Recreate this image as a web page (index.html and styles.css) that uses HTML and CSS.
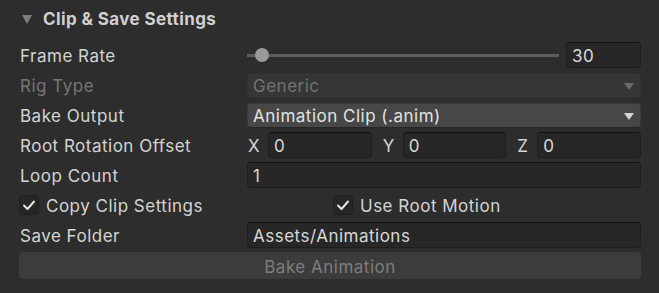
FILE: index.html
```html
<!DOCTYPE html>
<html>
<head>
<meta charset="utf-8">
<link rel="stylesheet" href="styles.css">
</head>
<body>
<div class="panel">
  <div class="header">
    <span class="fold"></span>
    <span class="title">Clip &amp; Save Settings</span>
  </div>
  <div class="rows">
    <div class="row">
      <div class="label">Frame Rate</div>
      <div class="slider-wrap">
        <div class="slider"><div class="track"></div><div class="thumb"></div></div>
        <div class="field num">30</div>
      </div>
    </div>
    <div class="row">
      <div class="label disabled">Rig Type</div>
      <div class="dropdown off"><span>Generic</span><span class="arrow"></span></div>
    </div>
    <div class="row">
      <div class="label">Bake Output</div>
      <div class="dropdown"><span>Animation Clip (.anim)</span><span class="arrow"></span></div>
    </div>
    <div class="row">
      <div class="label">Root Rotation Offset</div>
      <div class="vec">
        <div class="axis"><span class="al">X</span><div class="field">0</div></div>
        <div class="axis"><span class="al">Y</span><div class="field">0</div></div>
        <div class="axis"><span class="al">Z</span><div class="field">0</div></div>
      </div>
    </div>
    <div class="row">
      <div class="label">Loop Count</div>
      <div class="field">1</div>
    </div>
    <div class="row checks">
      <label class="check"><span class="box"><svg viewBox="0 0 20 20" width="20" height="20"><path d="M5 10.5 L8.5 14 L15 6.5" fill="none" stroke="#e6e6e6" stroke-width="2" stroke-linecap="round" stroke-linejoin="round"/></svg></span><span class="ct">Copy Clip Settings</span></label>
      <label class="check second"><span class="box"><svg viewBox="0 0 20 20" width="20" height="20"><path d="M5 10.5 L8.5 14 L15 6.5" fill="none" stroke="#e6e6e6" stroke-width="2" stroke-linecap="round" stroke-linejoin="round"/></svg></span><span class="ct">Use Root Motion</span></label>
    </div>
    <div class="row">
      <div class="label">Save Folder</div>
      <div class="field">Assets/Animations</div>
    </div>
    <div class="button">Bake Animation</div>
  </div>
</div>
</body>
</html>
```
FILE: styles.css
```css
html, body {
  margin: 0;
  padding: 0;
  background: #2d2d2d;
}
body {
  width: 659px;
  height: 293px;
  overflow: hidden;
  font-family: Inter, "Noto Sans", sans-serif;
  font-size: 17px;
  letter-spacing: 0.5px;
  color: #d4d4d4;
}
.panel {
  padding: 6px 18px 0 19px;
}
.header {
  height: 26px;
  display: flex;
  align-items: center;
  margin-bottom: 10px;
}
.fold {
  width: 0;
  height: 0;
  border-left: 5px solid transparent;
  border-right: 5px solid transparent;
  border-top: 9px solid #7c7c7c;
  margin-left: 3px;
  margin-right: 11px;
}
.title {
  font-weight: 700;
  letter-spacing: 0.4px;
  color: #d0d0d0;
}
.rows {
  display: flex;
  flex-direction: column;
  gap: 4px;
}
.row {
  display: grid;
  grid-template-columns: 228px 1fr;
  height: 26px;
  align-items: center;
}
.label {
  padding-left: 1px;
  padding-top: 2px;
  white-space: nowrap;
}
.label.disabled {
  color: #767676;
}
.slider-wrap {
  display: flex;
  align-items: center;
  gap: 7px;
  height: 26px;
}
.slider {
  flex: 1;
  position: relative;
  height: 26px;
  display: flex;
  align-items: center;
}
.track {
  width: 100%;
  height: 3px;
  background: #5d5d5d;
}
.thumb {
  position: absolute;
  left: 8px;
  top: 6px;
  width: 14px;
  height: 14px;
  border-radius: 50%;
  background: #999999;
}
.field {
  box-sizing: border-box;
  height: 26px;
  background: #272727;
  border: 1px solid #1e1e1e;
  border-top-color: #121212;
  border-radius: 4px;
  padding: 2px 5px 0;
  display: flex;
  align-items: center;
  color: #d8d8d8;
  white-space: nowrap;
}
.field.num {
  width: 75px;
}
.dropdown {
  box-sizing: border-box;
  height: 25px;
  background: #474747;
  border-radius: 4px;
  border: 1px solid #3a3a3a;
  border-bottom-color: #262626;
  padding: 2px 5px 0;
  display: flex;
  align-items: center;
  justify-content: space-between;
  color: #e2e2e2;
}
.dropdown.off {
  background: #363636;
  border-color: #333;
  color: #727272;
}
.arrow {
  width: 0;
  height: 0;
  border-left: 5px solid transparent;
  border-right: 5px solid transparent;
  border-top: 7px solid #d4d4d4;
  margin-right: 1px;
}
.dropdown.off .arrow {
  border-top-color: #6a6a6a;
}
.vec {
  display: grid;
  grid-template-columns: 1fr 1fr 1fr;
  column-gap: 10px;
}
.axis {
  display: flex;
  align-items: center;
}
.al {
  width: 21px;
  flex: none;
  padding-left: 1px;
  padding-top: 2px;
  box-sizing: border-box;
}
.axis .field {
  flex: 1;
}
.checks {
  grid-template-columns: 1fr 1fr;
  column-gap: 4px;
}
.check {
  display: flex;
  align-items: center;
  gap: 7px;
}
.check.second {
  padding-left: 1px;
}
.ct {
  padding-top: 2px;
}
.box {
  width: 20px;
  height: 20px;
  box-sizing: border-box;
  border-radius: 3px;
  background: #262626;
  border: 1px solid #202020;
  display: flex;
  align-items: center;
  justify-content: center;
}
.box svg {
  display: block;
  flex: none;
}
.button {
  box-sizing: border-box;
  height: 27px;
  padding-top: 2px;
  background: #3c3c3c;
  border-radius: 4px;
  display: flex;
  align-items: center;
  justify-content: center;
  color: #7e7e7e;
}
```
